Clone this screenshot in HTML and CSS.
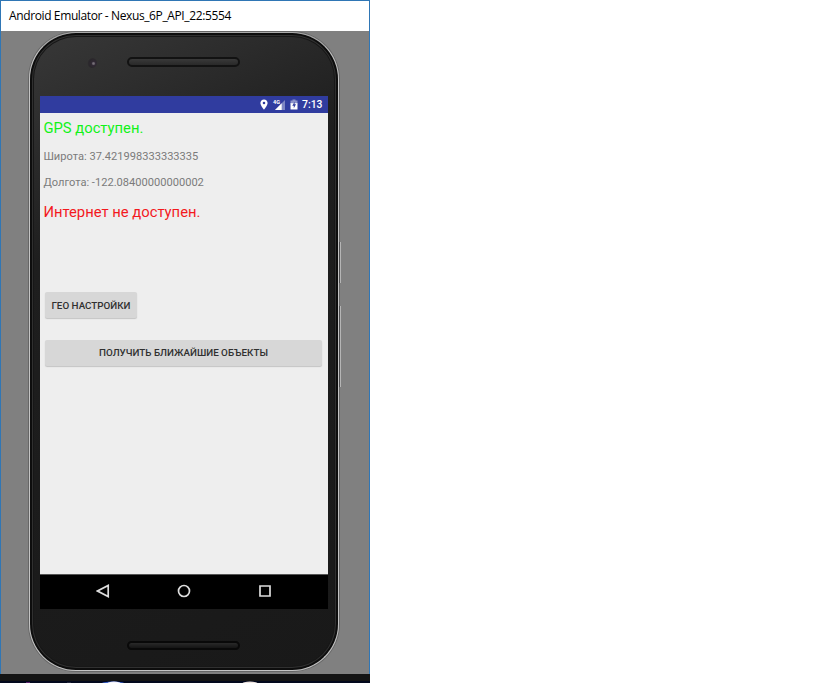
FILE: index.html
```html
<!DOCTYPE html>
<html lang="ru">
<head>
<meta charset="utf-8">
<title>Android Emulator</title>
<link rel="stylesheet" href="styles.css">
</head>
<body>
<main class="window">
  <header class="titlebar"><span class="title">Android Emulator - Nexus_6P_API_22:5554</span></header>
  <div class="stage">
    <div class="phone">
      <div class="top-bezel"><i class="camera"></i><i class="speaker"></i></div>
      <div class="screen">
        <div class="status">
          <svg class="pin" viewBox="0 0 8 11"><path fill="#fff" fill-rule="evenodd" d="M4 .4C1.9.4.4 2 .4 4c0 2.5 3.6 6.6 3.6 6.6S7.6 6.500 7.600 4C7.600 2 6.100.4 4 .4ZM4 2.700a1.300 1.300 0 1 1 0 2.600 1.300 1.300 0 0 1 0-2.600Z"/></svg>
          <span class="network">
            <span class="generation">4G</span>
            <svg class="signal" viewBox="0 0 10 10"><path fill="#fff" fill-opacity=".38" d="M10 0v10H0Z"/><path fill="#fff" d="M6.700 3.300V10H0Z"/></svg>
          </span>
          <svg class="battery" viewBox="0 0 8 11"><path fill="#fff" fill-opacity=".45" d="M2.500.5h3v1H7.500V5H.5V1.500h2Z"/><path fill="#fff" d="M.5 4.200h7v6.300h-7Z"/><path fill="#303c9f" d="M4.600 2.800 2.300 6.700h1.500v2.600l2.200-4H4.600Z"/></svg>
          <span class="clock">7:13</span>
        </div>
        <div class="app">
          <p class="large ok"><span>GPS доступен.</span></p>
          <p class="small lat"><span>Широта: 37.421998333333335</span></p>
          <p class="small lon"><span>Долгота: -122.08400000000002</span></p>
          <p class="large error"><span>Интернет не доступен.</span></p>
          <button class="btn geo"><span>ГЕО НАСТРОЙКИ</span></button>
          <button class="btn nearby"><span>ПОЛУЧИТЬ БЛИЖАЙШИЕ ОБЪЕКТЫ</span></button>
        </div>
        <nav class="nav">
          <svg viewBox="0 0 14 14"><path d="M12.200 1.500v11L1.500 7Z"/></svg>
          <svg viewBox="0 0 14 14"><circle cx="7" cy="7" r="5.500"/></svg>
          <svg viewBox="0 0 14 14"><path d="M2 2h10v10H2Z"/></svg>
        </nav>
      </div>
      <div class="bottom-bezel"><i class="speaker"></i></div>
      <i class="side-key power"></i>
      <i class="side-key volume"></i>
    </div>
  </div>
</main>
<footer class="taskbar">
  <svg viewBox="0 0 370 9"><path fill="#02081d" d="M0 7h370v2H0Z"/><ellipse cx="113" cy="10" rx="12" ry="2.500" fill="#3b63ce"/><ellipse cx="114" cy="10" rx="7" ry="2.500" fill="#f4f4ff"/><ellipse cx="250" cy="10" rx="8" ry="2.500" fill="#eee4df"/><path fill="#5b226c" d="M26 8h4v1h-4Z"/><path fill="#22263b" d="M67 8h4v1h-4Z"/></svg>
</footer>
</body>
</html>
```

FILE: styles.css
```css
* { box-sizing: border-box; }
body { margin: 0; width: 819px; height: 683px; background: #fff; overflow: hidden; font-family: Roboto, sans-serif; }
p { margin: 0; }
span, i { display: block; }
svg { display: block; }
.window { width: 370px; height: 674px; border: 1px solid #2f76b5; border-bottom: 0; background: #808080; }
.titlebar { height: 30px; padding-left: 8px; background: #fff; }
.title { font: 12px/30px "Open Sans", sans-serif; letter-spacing: -.38px; color: #000; white-space: nowrap; }
.stage { padding: 1px 0 0 28px; }
.phone {
  position: relative;
  width: 310px;
  height: 639px;
  padding: 0 10px;
  border: 1px solid #c4c4c4;
  border-top-color: #aaa;
  border-radius: 47px;
  background: linear-gradient(155deg, #383838 0, #2e2e2e 12%, #1e1e1e 30%, #191919 100%);
  box-shadow: inset 0 0 0 2px #0d0d0d, inset 0 0 0 3px #303030, inset 0 0 0 4px #171717, 0 0 0 1px #666;
}
.top-bezel { height: 63px; display: flex; align-items: flex-start; padding: 24px 0 0 49px; }
.camera { width: 10px; height: 10px; margin: 1px 33px 0 -2px; border-radius: 50%; background: radial-gradient(circle at 65% 55%, #777079 0 8%, #302934 24%, #29262a 55%, #333 75%); }
.speaker { width: 113px; height: 10px; border: 2px solid #121212; border-radius: 5px; background: linear-gradient(#393939, #292929); }
.bottom-bezel { height: 61px; padding: 32px 0 0 88px; }
.bottom-bezel .speaker { height: 9px; margin-left: -1px; border-color: #090909; background: linear-gradient(#292929, #151515); }
.top-bezel .speaker { margin-left: -3px; }
.screen { width: 288px; height: 513px; }
.status { height: 17px; background: #303c9f; display: flex; align-items: center; color: #fff; padding-left: 220px; }
.pin { width: 8px; height: 11px; }
.network { width: 12px; height: 11px; margin-left: 5px; display: grid; }
.generation { grid-area: 1 / 1; font-size: 5.500px; line-height: 6px; font-weight: 700; }
.signal { grid-area: 1 / 1; width: 10px; height: 10px; margin: 1px 0 0 2px; }
.battery { width: 8px; height: 11px; margin-left: 5px; }
.clock { margin-left: 4px; font-size: 10.400px; line-height: 18px; font-weight: 500; padding-top: 1px; }
.app { height: 461px; background: #eee; display: flex; flex-direction: column; align-items: flex-start; padding: 5px 6px 0 3.400px; }
.large { font-size: 14.800px; line-height: 20px; height: 28px; white-space: nowrap; }
.ok { color: #12f21a; height: 29px; }
.error { color: #f3191e; height: 85px; }
.small { color: #7b7b7b; font-size: 11.100px; line-height: 20px; white-space: nowrap; }
.lat { height: 26px; }
.lon { height: 29px; }
.btn { margin: 0 0 0 1.600px; padding: 0; border: 0; border-radius: 2px; background: #d7d7d7; color: #303030; font: 500 9.820px/26px Roboto, sans-serif; height: 26px; box-shadow: 0 1px 1px #c4c4c4; white-space: nowrap; text-align: center; }
.geo { width: 92px; margin-top: 5px; line-height: 27px; }
.nearby { width: 277px; margin-top: 22px; }
.nav { height: 35px; background: #000; border-top: 1px solid #555; display: flex; padding: 9px 0 0 55.600px; gap: 67px; }
.nav svg { width: 14px; height: 14px; fill: none; stroke: #ddd; stroke-width: 1.700; }
.side-key { position: absolute; right: -3px; width: 2px; background: #4b4b4d; border-right: 1px solid #b5b5b5; }
.power { top: 209px; height: 41px; }
.volume { top: 273px; height: 81px; }
.taskbar { width: 370px; height: 9px; background: #141414; }
.taskbar svg { width: 370px; height: 9px; }
```
